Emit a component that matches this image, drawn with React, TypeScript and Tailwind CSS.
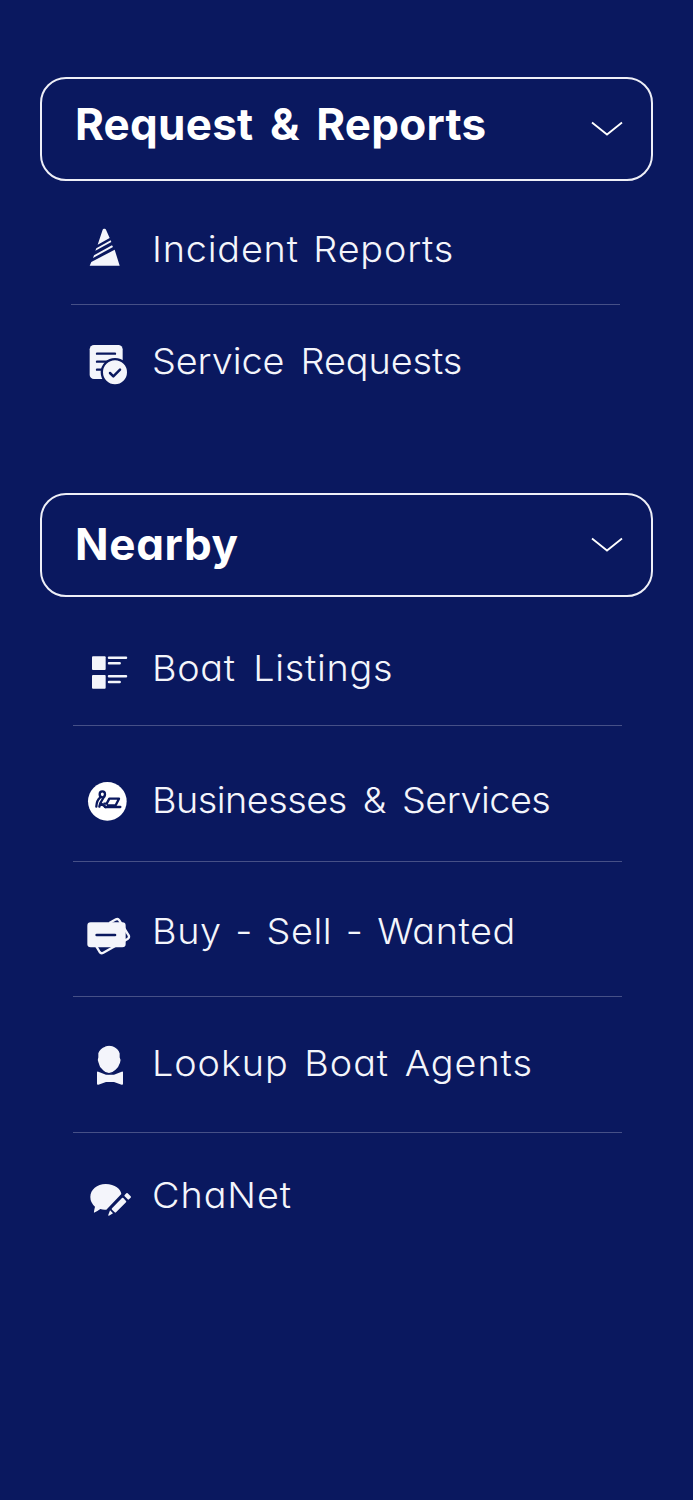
import React from 'react';

const ink = '#0a185f';
const light = '#f4f5fb';

const iconClass = 'h-14 w-[60px] shrink-0';

function ConeIcon() {
  return (
    <svg className={iconClass} viewBox="0 3 180 168" fill={light}>
      <path d="M68 29Q69 26 72 26H74Q77 26 78 29L89 54L53 74Z" />
      <path d="M49 85L92 61L94 66L46 92Z" />
      <path d="M42 106L96 76L99 81L39 114Z" />
      <path d="M34 126L104 89L119 137H29Z" />
    </svg>
  );
}

function ServiceIcon() {
  return (
    <svg className={iconClass} viewBox="0 -9 180 168" fill="none" strokeLinecap="round">
      <rect x="29" y="27" width="99" height="102" rx="13" fill={light} />
      <path d="M51 53H105M51 77H83M51 101H68" stroke={ink} strokeWidth="7" />
      <circle cx="105" cy="109" r="39.5" fill={light} stroke={ink} strokeWidth="7" />
      <path d="M90 111L100 121L120 101" stroke={ink} strokeWidth="7.5" strokeLinejoin="round" />
    </svg>
  );
}

function ListingIcon() {
  return (
    <svg className={iconClass} viewBox="0 -15 180 168" fill={light}>
      <rect x="36" y="34" width="41" height="41" rx="3" />
      <rect x="36" y="90" width="41" height="41" rx="3" />
      <path
        d="M87 38H138M87 55H119M87 94H138M87 111H119"
        stroke={light}
        strokeWidth="7.5"
        strokeLinecap="round"
      />
    </svg>
  );
}

function BusinessIcon() {
  return (
    <svg className={iconClass} viewBox="0 -3 180 168" fill="none">
      <circle cx="82" cy="85" r="58" fill="#fff" />
      <g stroke={ink} strokeWidth="7" strokeLinejoin="round" strokeLinecap="round">
        <ellipse cx="67" cy="64" rx="8" ry="9" />
        <path d="M60 74Q50 82 49 101M70 75L61 90L77 102M61 90L58 101" />
        <path d="M73 92H80L88 77H117L107 97H84" />
        <path d="M75 102H121" />
      </g>
    </svg>
  );
}

function TradeIcon() {
  return (
    <svg className={iconClass} viewBox="0 -14 180 168" fill="none">
      <path
        d="M88 46L108 35Q114 32 118 38L146 83Q149 89 144 93L70 135Q63 139 59 133L49 116"
        stroke={light}
        strokeWidth="7"
        strokeLinejoin="round"
      />
      <rect x="22" y="44" width="115" height="75" rx="10" fill={light} />
      <path d="M50 82H105" stroke={ink} strokeWidth="8" strokeLinecap="round" />
    </svg>
  );
}

function AgentIcon() {
  return (
    <svg className={iconClass} viewBox="0 -9 180 168" fill={light}>
      <path d="M51 103Q51 100 55 101L78 110H102L125 101Q129 100 129 103V137Q129 141 125 140L102 132H78L55 140Q51 141 51 137Z" />
      <path
        d="M75 24Q87 19 100 24Q116 30 121 46V58Q126 65 122 75Q118 88 108 97Q98 107 87 107Q76 107 67 97Q56 88 54 75Q49 65 53 58V45Q59 29 75 24Z"
        stroke={ink}
        strokeWidth="4"
      />
    </svg>
  );
}

function ChatIcon() {
  return (
    <svg className={iconClass} viewBox="0 -9 180 168" fill={light}>
      <path d="M77 42C105 42 123 58 124 72L79 119Q69 120 61 117Q52 124 42 128Q41 126 45 110Q31 98 31 81C31 59 51 42 77 42Z" />
      <path d="M96 115L126 84Q128 82 130 84L138 93Q140 95 138 97L108 127Q106 129 104 127L96 119Q94 117 96 115Z" />
      <path d="M134 75L139 70Q141 68 143 70L152 79Q154 81 152 83L147 88Q145 90 143 88L134 79Q132 77 134 75Z" />
      <path d="M90 121L99 130L87 137Q84 138 85 134Z" />
    </svg>
  );
}

const requestItems = [
  { label: 'Incident Reports', icon: ConeIcon, row: 'pt-10 pb-[27px] border-b', text: 'tracking-[0.77px] [word-spacing:3px]' },
  { label: 'Service Requests', icon: ServiceIcon, row: 'pt-7', text: 'tracking-[-0.08px] [word-spacing:5.5px]' },
];

const nearbyItems = [
  { label: 'Boat Listings', icon: ListingIcon, row: 'pt-[43px] pb-[29px] border-b', text: 'tracking-[0.65px] [word-spacing:6px]' },
  { label: 'Businesses & Services', icon: BusinessIcon, row: 'pt-[46px] pb-[33px] border-b', text: 'tracking-[-0.48px] [word-spacing:5.7px]' },
  { label: 'Buy - Sell - Wanted', icon: TradeIcon, row: 'pt-[41px] pb-[37px] border-b', text: 'tracking-[0.55px] [word-spacing:2.3px]' },
  { label: 'Lookup Boat Agents', icon: AgentIcon, row: 'pt-[38px] pb-[41px] border-b', text: 'tracking-[0.88px] [word-spacing:3.9px]' },
  { label: 'ChaNet', icon: ChatIcon, row: 'pt-[34px]', text: 'tracking-[0.9px]' },
];

function SectionHeader({ title, className }: { title: string; className: string }) {
  return (
    <button
      type="button"
      className="flex h-[104px] w-[613px] items-center justify-between rounded-[26px] border-2 border-[#eeeff7] pr-7 pl-[33px] text-left"
    >
      <span className={`text-[44px] leading-[52px] font-bold whitespace-nowrap text-white ${className}`}>
        {title}
      </span>
      <svg className="h-4 w-8 shrink-0" viewBox="0 0 32 16" fill="none">
        <path d="M1 1.5L16 13.5L31 1.5" stroke="#fff" strokeWidth="1.8" />
      </svg>
    </button>
  );
}

function MenuList({ items, className }: { items: typeof nearbyItems; className: string }) {
  return (
    <ul className={`w-[549px] ${className}`}>
      {items.map(({ label, icon: ItemIcon, row, text }) => (
        <li key={label} className={`border-[#465087] ${row}`}>
          <a href="#" className="flex h-14 items-center gap-3">
            <ItemIcon />
            <span
              className={`origin-left scale-x-105 text-[36px] leading-[44px] font-light whitespace-nowrap text-[#f4f5fb] ${text}`}
            >
              {label}
            </span>
          </a>
        </li>
      ))}
    </ul>
  );
}

export default function App() {
  return (
    <main className="min-h-[1500px] w-full overflow-hidden bg-[#0a185f] pt-[77px] pl-10 font-['Inter',sans-serif] [font-feature-settings:'cv11']">
      {/* Request & Reports */}
      <section>
        <SectionHeader title="Request & Reports" className="-mt-[11px] tracking-[0.25px] [word-spacing:5.8px]" />
        <MenuList items={requestItems} className="ml-[31px] [&_a]:pl-[9px]" />
      </section>

      {/* Nearby */}
      <section className="mt-[104px]">
        <SectionHeader title="Nearby" className="-mt-[3px] tracking-[0.7px]" />
        <MenuList items={nearbyItems} className="ml-[33px] [&_a]:pl-[7px]" />
      </section>
    </main>
  );
}
